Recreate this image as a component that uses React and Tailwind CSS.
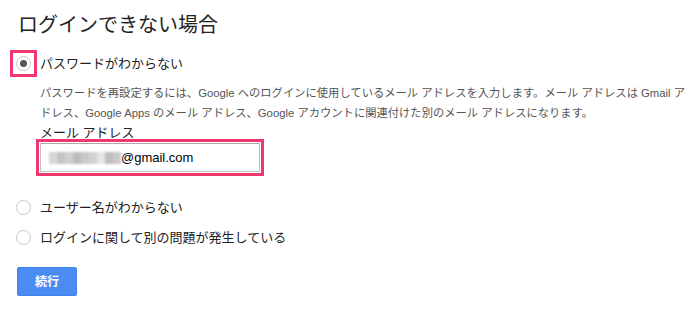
import { useState } from "react";

const FONT = { fontFamily: '"Liberation Sans", "Noto Sans CJK JP", sans-serif' };

function Radio({ checked, marked }) {
    return (
        <div className={`w-[27px] h-[27px] grid place-items-center border-[3px] ${marked ? "border-[#f0386f]" : "border-transparent"}`}>
            <div className="w-[15px] h-[15px] rounded-full border border-[#c9c9c9] bg-white grid place-items-center">
                {checked && <div className="w-[7px] h-[7px] rounded-full bg-[#555]" />}
            </div>
        </div>
    );
}

function Blur() {
    const shades = ["#d6d6d6", "#c4c4c4", "#cfcfcf", "#bcbcbc", "#c9c9c9", "#d2d2d2", "#e6e6e6", "#c0c0c0", "#cbcbcb"];
    return (
        <div className="flex h-[12px] blur-[1px]">
            {shades.map((c, i) => (
                <div key={i} className="w-[8px] h-full" style={{ background: c }} />
            ))}
        </div>
    );
}

export default function App() {
    const [choice, setChoice] = useState("password");
    return (
        <div className="w-[692px] h-[323px] bg-white pl-[10px] pt-[11px] text-[#222]" style={FONT}>
            <h1 className="ml-[8px] text-[20px] leading-[28px] font-normal">ログインできない場合</h1>

            <div className="mt-[11px] flex items-center cursor-pointer" onClick={() => setChoice("password")}>
                <Radio checked={choice === "password"} marked />
                <span className="ml-[3px] text-[13px] text-[#222]">パスワードがわからない</span>
            </div>

            <div className="pl-[30px]">
                <p className="mt-[6px] text-[11.3px] leading-[20px] text-[#555]">
                    パスワードを再設定するには、Google へのログインに使用しているメール アドレスを入力します。メール アドレスは Gmail アドレス、Google Apps のメール アドレス、Google アカウントに関連付けた別のメール アドレスになります。
                </p>
                <p className="mt-[2px] text-[13px] leading-[16px] text-[#222]">メール アドレス</p>
                <div className="mt-[-2px] ml-[-4px] w-[228px] h-[37px] border-[3px] border-[#f0386f] p-[1px]">
                    <div className="h-full border border-[#c0c0c0] border-t-[#a8a8a8] bg-white flex items-center pl-[8px] text-[13px] text-black">
                        <Blur />
                        <span>@gmail.com</span>
                    </div>
                </div>
            </div>

            <div className="mt-[18px] flex flex-col gap-[3px]">
                <div className="flex items-center cursor-pointer" onClick={() => setChoice("username")}>
                    <Radio checked={choice === "username"} />
                    <span className="ml-[3px] text-[13px] text-[#222]">ユーザー名がわからない</span>
                </div>
                <div className="flex items-center cursor-pointer" onClick={() => setChoice("other")}>
                    <Radio checked={choice === "other"} />
                    <span className="ml-[3px] text-[13px] text-[#222]">ログインに関して別の問題が発生している</span>
                </div>
            </div>

            <button className="mt-[16px] ml-[7px] w-[60px] h-[29px] rounded-[2px] border border-[#3f83ee] bg-[#4a8cf2] text-white text-[12px] font-bold">
                続行
            </button>
        </div>
    );
}
